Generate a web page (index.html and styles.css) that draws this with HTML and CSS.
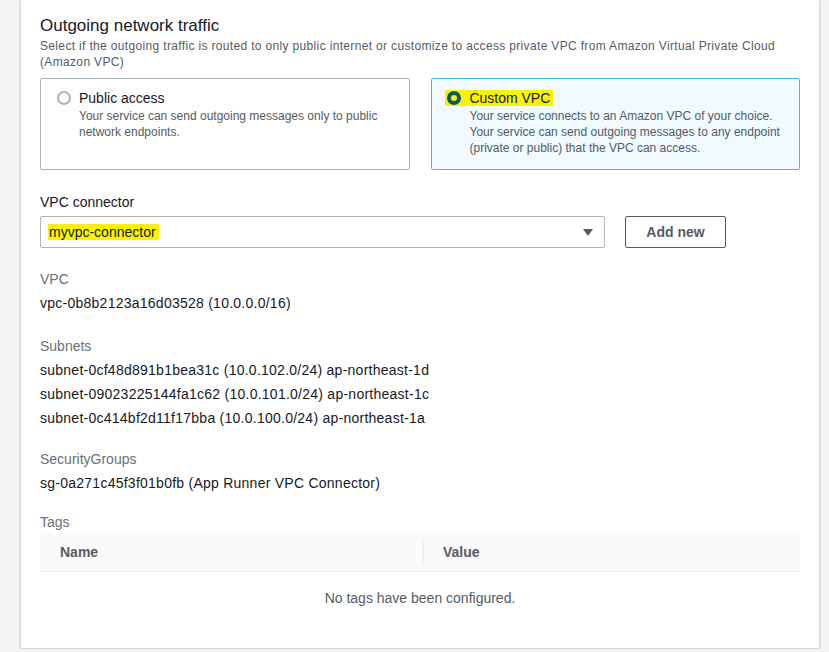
FILE: index.html
```html
<!DOCTYPE html>
<html lang="en">
<head>
    <meta charset="UTF-8">
    <meta name="viewport" content="width=device-width, initial-scale=1.0">
    <title>Networking</title>
    <link rel="stylesheet" href="styles.css">
</head>
<body>
    <div class="panel">
        <!-- Outgoing traffic choice -->
        <h2>Outgoing network traffic</h2>
        <p class="hint">Select if the outgoing traffic is routed to only public internet or customize to access private VPC from Amazon Virtual Private Cloud (Amazon VPC)</p>

        <div class="tiles">
            <label class="tile">
                <span class="radio"></span>
                <span class="tile-body">
                    <span class="tile-title">Public access</span>
                    <span class="tile-desc">Your service can send outgoing messages only to public network endpoints.</span>
                </span>
            </label>
            <label class="tile selected">
                <span class="tile-head">
                    <span class="mark"><span class="radio checked"></span> Custom VPC</span>
                </span>
                <span class="tile-body indent">
                    <span class="tile-desc">Your service connects to an Amazon VPC of your choice. Your service can send outgoing messages to any endpoint (private or public) that the VPC can access.</span>
                </span>
            </label>
        </div>

        <!-- Connector picker -->
        <div class="field">
            <div class="field-label">VPC connector</div>
            <div class="picker">
                <div class="select">
                    <span class="mark">myvpc-connector</span>
                    <svg class="caret" width="10" height="7" viewBox="0 0 10 7"><path d="M0 0h10L5 7z" fill="#545b64"/></svg>
                </div>
                <button class="btn">Add new</button>
            </div>
        </div>

        <!-- Connector details -->
        <div class="kv">
            <div class="kv-label">VPC</div>
            <div class="kv-value">vpc-0b8b2123a16d03528 (10.0.0.0/16)</div>
        </div>
        <div class="kv">
            <div class="kv-label">Subnets</div>
            <div class="kv-value">subnet-0cf48d891b1bea31c (10.0.102.0/24) ap-northeast-1d</div>
            <div class="kv-value">subnet-09023225144fa1c62 (10.0.101.0/24) ap-northeast-1c</div>
            <div class="kv-value">subnet-0c414bf2d11f17bba (10.0.100.0/24) ap-northeast-1a</div>
        </div>
        <div class="kv kv-tight">
            <div class="kv-label">SecurityGroups</div>
            <div class="kv-value">sg-0a271c45f3f01b0fb (App Runner VPC Connector)</div>
        </div>

        <div class="tags">
            <div class="kv-label">Tags</div>
            <div class="table">
                <div class="thead">
                    <div class="th">Name</div>
                    <div class="th th-sep">Value</div>
                </div>
                <div class="empty">No tags have been configured.</div>
            </div>
        </div>
    </div>
</body>
</html>
```

FILE: styles.css
```css
body {
    background-color: #f2f3f3;
    font-family: "Liberation Sans", Arial, sans-serif;
    color: #16191f;
    margin: 0;
    padding: 0 9px 0 20px;
}
.panel {
    background-color: #ffffff;
    border: 1px solid #d5dbdb;
    border-top: none;
    box-shadow: 0 1px 1px rgba(0, 28, 36, 0.3);
    width: 760px;
    padding: 15px 19px 0 19px;
    height: 633px;
}
h2 {
    font-size: 17px;
    font-weight: normal;
    line-height: 22px;
    margin: 0;
}
.hint {
    font-size: 12px;
    line-height: 16px;
    letter-spacing: 0.34px;
    color: #545b64;
    margin: 1px 0 0;
}
.tiles {
    display: grid;
    grid-template-columns: 1fr 1fr;
    gap: 21px;
    margin-top: 8px;
}
.tile {
    display: flex;
    border: 1px solid #aab7b8;
    border-radius: 2px;
    padding: 10px 16px 13px 16px;
    gap: 8px;
    align-items: flex-start;
}
.tile.selected {
    flex-direction: column;
    gap: 0;
    background-color: #f1faff;
    border-color: #44b9d6;
    padding-left: 15px;
}
.radio {
    width: 10px;
    height: 10px;
    border: 2px solid #aab7b8;
    border-radius: 50%;
    margin-top: 2px;
    flex-shrink: 0;
}
.radio.checked {
    display: inline-block;
    width: 6px;
    height: 6px;
    border: 4px solid #0a5a6c;
    margin: 0 5px 0 1px;
    vertical-align: -2px;
}
.tile-body {
    display: flex;
    flex-direction: column;
}
.tile-body.indent {
    padding-left: 23px;
}
.tile-title {
    font-size: 14px;
    line-height: 18px;
}
.tile-head {
    font-size: 14px;
    line-height: 18px;
}
.tile-desc {
    font-size: 12px;
    line-height: 16px;
    color: #545b64;
    margin-top: 1px;
}
.mark {
    background-color: #f9f300;
    padding: 0 3px 0 1px;
    margin-left: -2px;
}
.field {
    margin-top: 23px;
}
.field-label {
    font-size: 14px;
    line-height: 18px;
}
.picker {
    display: flex;
    gap: 20px;
    margin-top: 5px;
}
.select {
    width: 543px;
    height: 30px;
    border: 1px solid #aab7b8;
    border-radius: 2px;
    display: flex;
    align-items: center;
    justify-content: space-between;
    padding: 0 11px 0 9px;
    font-size: 14px;
}
.btn {
    width: 101px;
    height: 32px;
    background-color: #ffffff;
    border: 1px solid #545b64;
    border-radius: 2px;
    font-family: inherit;
    font-size: 14px;
    font-weight: bold;
    color: #545b64;
}
.kv {
    margin-top: 21px;
}
.kv + .kv {
    margin-top: 21px;
}
.kv.kv-tight {
    margin-top: 19px;
}
.kv-label {
    font-size: 14px;
    line-height: 20px;
    color: #687078;
}
.kv .kv-label {
    margin-bottom: 2px;
}
.kv-value {
    font-size: 14px;
    line-height: 24px;
    letter-spacing: 0.25px;
}
.tags {
    margin-top: 17px;
}
.table {
    margin-top: 1px;
}
.thead {
    display: flex;
    background-color: #fafafa;
    border-bottom: 1px solid #eaeded;
    height: 38px;
    align-items: center;
}
.th {
    font-size: 14px;
    font-weight: bold;
    color: #545b64;
    padding-left: 20px;
    width: 363px;
    flex-shrink: 0;
}
.th-sep {
    flex: 1;
    border-left: 1px solid #eaeded;
    height: 24px;
    line-height: 24px;
    padding-left: 19px;
}
.empty {
    text-align: center;
    font-size: 14px;
    color: #545b64;
    padding-top: 18px;
}
```
